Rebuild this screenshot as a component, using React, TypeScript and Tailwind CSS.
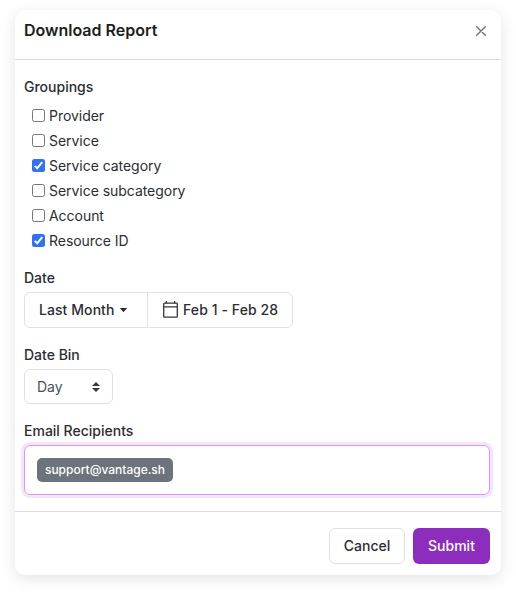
const groupings = [
  { label: "Provider", checked: false },
  { label: "Service", checked: false },
  { label: "Service category", checked: true },
  { label: "Service subcategory", checked: false },
  { label: "Account", checked: false },
  { label: "Resource ID", checked: true },
];

function Checkbox({ checked }: { checked: boolean }) {
  return checked ? (
    <span className="flex h-[13px] w-[13px] items-center justify-center rounded-[2.5px] bg-[#2f72f5]">
      <svg width="13" height="13" viewBox="0 0 13 13" fill="none" stroke="#fff" strokeWidth="2">
        <path d="M2.7 6.9 5.2 9.3 10.2 3.2" />
      </svg>
    </span>
  ) : (
    <span className="h-[13px] w-[13px] rounded-[2.5px] border border-[#767676] bg-white" />
  );
}

export default function App() {
  return (
    <div className="h-[595px] w-[516px] overflow-hidden bg-white pt-[10px] pl-[15px] font-['Inter',sans-serif] text-[14px] leading-5 text-[#2b2d33]">
      <div className="flex h-[565px] w-[486px] flex-col rounded-[10px] bg-white shadow-[0_4px_16px_rgba(0,0,0,0.11)]">
        <header className="flex h-[50px] items-start justify-between border-b border-[#dcdddf] pt-[8px] pr-[15px] pl-[9px]">
          <h1 className="text-[16px] leading-6 font-semibold text-[#1c1d20]">Download Report</h1>
          <button className="mt-[8px]" aria-label="Close">
            <svg width="10" height="10" viewBox="0 0 10 10" stroke="#747474" strokeWidth="1.4" strokeLinecap="round">
              <path d="M.7.7 9.3 9.3M9.3.7.7 9.3" />
            </svg>
          </button>
        </header>

        <main className="flex flex-1 flex-col pt-[17px] pr-[11px] pl-[9px]">
          <h2 className="font-medium">Groupings</h2>
          <ul className="mt-[6px] pl-2">
            {groupings.map((item) => (
              <li key={item.label} className="flex h-[25px] items-center gap-1">
                <Checkbox checked={item.checked} />
                <span className="tracking-[-0.04px]">{item.label}</span>
              </li>
            ))}
          </ul>

          <h2 className="mt-[15px] font-medium">Date</h2>
          <div className="mt-[4px] flex h-[36px] w-[269px] rounded-[6px] border border-[#e1e2e6] font-medium">
            <button className="flex w-[123px] items-center border-r border-[#e1e2e6] pl-[14px]">
              <span className="tracking-[0.07px]">Last Month</span>
              <svg className="ml-[6px]" width="7" height="4" viewBox="0 0 7 4" fill="#2b2d33">
                <path d="M.4 0h6.2q.6 0 .2.5L3.9 3.7q-.4.4-.8 0L.2.5Q-.2 0 .4 0Z" />
              </svg>
            </button>
            <button className="flex flex-1 items-center pl-[15px]">
              <svg className="mr-[5px] -mt-px" width="15" height="17" viewBox="0 0 15 17" fill="none" stroke="#34363c" strokeWidth="1.3">
                <rect x=".7" y="2.2" width="13.6" height="14" rx=".8" />
                <path d="M1 5.8h13M3.4 0v2.5M11.6 0v2.5" />
              </svg>
              <span className="tracking-[0.09px]">Feb 1 - Feb 28</span>
            </button>
          </div>

          <h2 className="mt-[17px] font-medium">Date Bin</h2>
          <button className="mt-[4px] flex h-[35px] w-[89px] items-center justify-between rounded-[6px] border border-[#dfe1e5] pr-[12px] pl-[12px] text-[#495057]">
            Day
            <svg width="8" height="10" viewBox="0 0 8 10" fill="#343a40">
              <path d="M4 0 8 4H0ZM0 6h8L4 10Z" />
            </svg>
          </button>

          <h2 className="mt-[17px] font-medium">Email Recipients</h2>
          <div className="mt-[4px] flex h-[50px] items-center rounded-[6px] border border-[#d798f5] pl-[12px] shadow-[0_0_0_3px_#f5e5fc]">
            <span className="flex h-6 w-[136px] items-center justify-center rounded-[5px] bg-[#6c737a] text-[12px] font-medium text-white">
              support@vantage.sh
            </span>
          </div>
        </main>

        <footer className="flex h-[64px] items-start justify-end gap-2 border-t border-[#dcdddf] pt-[16px] pr-[11px] font-medium">
          <button className="h-[36px] w-[76px] rounded-[6px] border border-[#dfe1e5]">Cancel</button>
          <button className="h-[36px] w-[77px] rounded-[6px] bg-[#8d2dbd] text-white">Submit</button>
        </footer>
      </div>
    </div>
  );
}
